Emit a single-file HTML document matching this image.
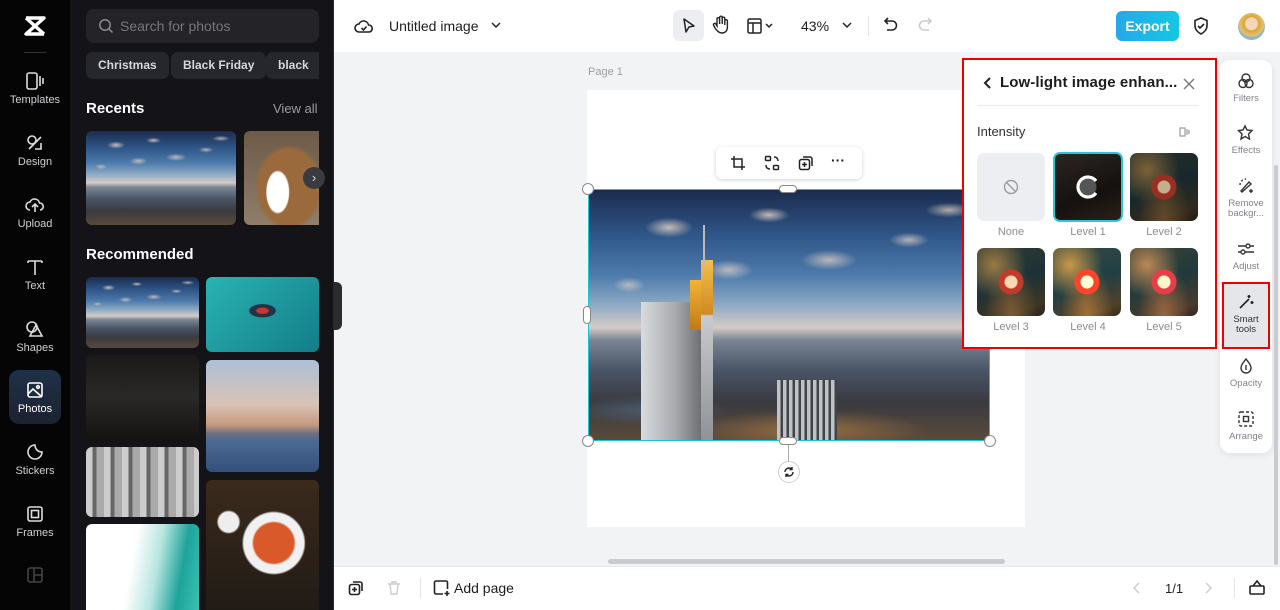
<!DOCTYPE html>
<html style="width:1280px;height:610px;overflow:hidden"><head><meta charset="utf-8"><style>
*{box-sizing:border-box;margin:0;padding:0}
body{width:1280px;height:610px;overflow:hidden;font-family:"Liberation Sans",sans-serif;background:#f1f3f5;position:relative}
.abs{position:absolute}
.nav{left:0;top:0;width:70px;height:610px;background:#050506}
.navi{position:absolute;left:0;width:70px;text-align:center;color:#cfd0d4;font-size:11px}
.navi svg{display:block;margin:0 auto 3px}
.panel{left:70px;top:0;width:264px;height:610px;background:#141418;overflow:hidden}
.chip{position:absolute;top:52px;height:27px;border-radius:7px;background:#26272c;color:#d6d7da;font-size:12px;font-weight:bold;line-height:27px;padding:0 12px}
.th{position:absolute;border-radius:6px;overflow:hidden}
.top{left:334px;top:0;width:946px;height:52px;background:#fff}
.bot{left:334px;top:566px;width:946px;height:44px;background:#fff;border-top:1px solid #e6e8eb}
.lbl{font-size:11px;color:#8a8d93;text-align:center;position:absolute;width:68px}
.tile{position:absolute;width:68px;height:68px;border-radius:7px;overflow:hidden}
.lant{background:radial-gradient(ellipse at 50% 50%,#f6d9b0 0 6px,#c23a2b 7px 12px,transparent 13px),radial-gradient(ellipse at 25% 25%,#9a7a45 0,transparent 45%),radial-gradient(ellipse at 50% 95%,#7a5a34 0,transparent 55%),linear-gradient(160deg,#2f3a34,#1d3236 50%,#3e3424 85%,#2a2218)}
.sb{position:absolute;left:1220px;width:52px;text-align:center;font-size:9.5px;color:#80838a;line-height:10px}
.sb svg{display:block;margin:0 auto 4px}
.sky{background:
 radial-gradient(ellipse 6% 4% at 20% 15%,rgba(235,215,200,.8),transparent),
 radial-gradient(ellipse 5% 3% at 45% 10%,rgba(235,215,200,.8),transparent),
 radial-gradient(ellipse 7% 4% at 60% 28%,rgba(235,215,200,.7),transparent),
 radial-gradient(ellipse 5% 3% at 80% 20%,rgba(235,215,200,.7),transparent),
 radial-gradient(ellipse 6% 4% at 35% 32%,rgba(235,215,200,.7),transparent),
 radial-gradient(ellipse 4% 3% at 10% 38%,rgba(235,215,200,.6),transparent),
 radial-gradient(ellipse 6% 3% at 90% 8%,rgba(235,215,200,.7),transparent),
 linear-gradient(180deg,#1b2b4e 0,#2f5688 18%,#4d7bab 34%,#8eaac4 46%,#d4cbc6 55%,#7b8593 60%,#4a5566 72%,#3a3a40 85%,#5a4a3a 100%)}
</style></head><body>
<div class="abs nav">
 <svg class="abs" style="left:24px;top:16px" width="22" height="20" viewBox="0 0 22 20"><path d="M2 2h18L2 18h18" fill="none" stroke="#fff" stroke-width="3.4" stroke-linejoin="round"/><path d="M2 2L20 18" stroke="#fff" stroke-width="3.4"/></svg>
 <div class="abs" style="left:24px;top:52px;width:22px;height:1px;background:#333"></div>
 <div class="navi" style="top:71px"><svg width="20" height="20" viewBox="0 0 20 20" fill="none" stroke="#ddd" stroke-width="1.6"><rect x="2" y="2" width="10" height="16" rx="2"/><path d="M15 5v10M18 7v6"/></svg>Templates</div>
 <div class="navi" style="top:133px"><svg width="20" height="20" viewBox="0 0 20 20" fill="none" stroke="#ddd" stroke-width="1.6"><circle cx="7" cy="7" r="4"/><path d="M4 16L16 4M10 16h6v-6"/></svg>Design</div>
 <div class="navi" style="top:195px"><svg width="20" height="20" viewBox="0 0 20 20" fill="none" stroke="#ddd" stroke-width="1.6"><path d="M5 15a4 4 0 010-8 5 5 0 019.5 1A3.5 3.5 0 0115 15M10 17v-7M7 12l3-3 3 3"/></svg>Upload</div>
 <div class="navi" style="top:257px"><svg width="20" height="20" viewBox="0 0 20 20" fill="none" stroke="#ddd" stroke-width="1.6"><path d="M3 4h14M10 4v14M3 4v2M17 4v2"/></svg>Text</div>
 <div class="navi" style="top:319px"><svg width="20" height="20" viewBox="0 0 20 20" fill="none" stroke="#ddd" stroke-width="1.6"><circle cx="7" cy="8" r="5"/><path d="M11 6l6 11H5z"/></svg>Shapes</div>
 <div class="abs" style="left:9px;top:370px;width:52px;height:54px;border-radius:10px;background:linear-gradient(#1e3148,#1c2230)"></div>
 <div class="navi" style="top:380px;color:#fff"><svg width="20" height="20" viewBox="0 0 20 20" fill="none" stroke="#fff" stroke-width="1.6"><rect x="3" y="3" width="14" height="14" rx="2"/><path d="M3 14l5-5 9 8"/><circle cx="13" cy="7" r="1.3"/></svg>Photos</div>
 <div class="navi" style="top:442px"><svg width="20" height="20" viewBox="0 0 20 20" fill="none" stroke="#ddd" stroke-width="1.6"><path d="M17 10a7 7 0 11-7-7c0 4 3 7 7 7z"/></svg>Stickers</div>
 <div class="navi" style="top:504px"><svg width="20" height="20" viewBox="0 0 20 20" fill="none" stroke="#ddd" stroke-width="1.6"><rect x="3" y="3" width="14" height="14" rx="2"/><rect x="6.5" y="6.5" width="7" height="7"/></svg>Frames</div>
 <svg class="abs" style="left:26px;top:566px" width="18" height="18" viewBox="0 0 18 18" fill="none" stroke="#444" stroke-width="1.6"><rect x="2" y="2" width="14" height="14" rx="2"/><path d="M8 2v14M8 9h8"/></svg>
</div>
<div class="abs panel">
 <div class="abs" style="left:16px;top:9px;width:233px;height:34px;border-radius:8px;background:#232328"></div>
 <svg class="abs" style="left:28px;top:18px" width="16" height="16" viewBox="0 0 16 16" fill="none" stroke="#8a8b90" stroke-width="1.5"><circle cx="7" cy="7" r="5.2"/><path d="M11 11l3.5 3.5"/></svg>
 <div class="abs" style="left:50px;top:18px;font-size:14px;color:#76777c">Search for photos</div>
 <div class="chip" style="left:16px">Christmas</div>
 <div class="chip" style="left:101px">Black Friday</div>
 <div class="chip" style="left:196px;width:53px;border-radius:7px 0 0 7px">black</div>
 <div class="abs" style="left:16px;top:100px;font-size:15px;font-weight:bold;color:#fff">Recents</div>
 <div class="abs" style="left:203px;top:101px;font-size:13px;color:#9a9ba0">View all</div>
 <div class="th sky" style="left:16px;top:131px;width:150px;height:94px"></div>
 <div class="th" style="left:174px;top:131px;width:75px;height:94px;border-radius:6px 0 0 6px;background:radial-gradient(ellipse 12px 22px at 45% 65%,#fff 0 90%,transparent),radial-gradient(ellipse at 60% 60%,#9b6a3c 0 30px,transparent 34px),linear-gradient(#6d5b48,#8f7e6a)"></div>
 <div class="abs" style="left:233px;top:167px;width:22px;height:22px;border-radius:50%;background:#3a3b40;color:#ddd;font-size:13px;text-align:center;line-height:21px">›</div>
 <div class="abs" style="left:16px;top:246px;font-size:15px;font-weight:bold;color:#fff">Recommended</div>
 <div class="th sky" style="left:16px;top:277px;width:113px;height:71px"></div>
 <div class="th" style="left:136px;top:277px;width:113px;height:75px;background:radial-gradient(ellipse 14px 7px at 50% 45%,#c33 0 40%,#234 50% 90%,transparent),linear-gradient(135deg,#2ab3b3,#127d88)"></div>
 <div class="th" style="left:16px;top:355px;width:113px;height:84px;background:linear-gradient(#1a1918,#2a2927 50%,#141312)"></div>
 <div class="th" style="left:136px;top:360px;width:113px;height:112px;background:linear-gradient(180deg,#aec0d8 0,#d9c2b5 40%,#c59a7e 58%,#6a6e7e 66%,#4d6a93 72%,#33507a 100%)"></div>
 <div class="th" style="left:16px;top:447px;width:113px;height:70px;background:repeating-linear-gradient(90deg,#ccc 0 6px,#666 7px 10px,#aaa 11px 18px),#888"></div>
 <div class="th" style="left:136px;top:480px;width:113px;height:140px;background:radial-gradient(circle at 60% 45%,#d9592a 0 20px,#f1f1f1 22px 30px,transparent 32px),radial-gradient(circle at 20% 30%,#eee 0 10px,transparent 12px),linear-gradient(#3b2a1c,#1f1a16)"></div>
 <div class="th" style="left:16px;top:524px;width:113px;height:100px;background:linear-gradient(100deg,#fff 40%,#b8e6e0 60%,#1fa39a 80%,#3cc5b8)"></div>
</div>
<div class="abs" style="left:333px;top:0;width:1px;height:610px;background:#2a2a2e"></div>
<div class="abs" style="left:334px;top:282px;width:8px;height:48px;background:#2b2c30;border-radius:0 6px 6px 0"></div>
<div class="abs top">
 <svg class="abs" style="left:20px;top:17px" width="20" height="18" viewBox="0 0 20 18" fill="none" stroke="#222" stroke-width="1.6"><path d="M5 15a4 4 0 010-8 5 5 0 019.5 1A3.5 3.5 0 0115 15z"/><path d="M7.5 11l2 2 3-3.5"/></svg>
 <div class="abs" style="left:55px;top:18px;font-size:14px;color:#1d1d1f">Untitled image</div>
 <svg class="abs" style="left:157px;top:21px" width="10" height="8" viewBox="0 0 10 8"><path d="M1 2l4 4 4-4" fill="none" stroke="#222" stroke-width="1.5"/></svg>
 <div class="abs" style="left:339px;top:10px;width:31px;height:31px;border-radius:6px;background:#eceef1"></div>
 <svg class="abs" style="left:347px;top:17px" width="16" height="18" viewBox="0 0 16 18"><path d="M3 2l10 7-5 1-3 5z" fill="none" stroke="#222" stroke-width="1.5" stroke-linejoin="round"/></svg>
 <svg class="abs" style="left:378px;top:15px" width="18" height="20" viewBox="0 0 18 20" fill="none" stroke="#222" stroke-width="1.4"><path d="M5 11V4a1.3 1.3 0 012.6 0v5V2.5a1.3 1.3 0 012.6 0V9V3.5a1.3 1.3 0 012.6 0V10V6a1.3 1.3 0 012.6 0v6c0 4-2.5 6-5.5 6S5 16 3 13l-1.5-3a1.3 1.3 0 012.2-1.2z"/></svg>
 <svg class="abs" style="left:412px;top:17px" width="30" height="18" viewBox="0 0 30 18" fill="none" stroke="#222" stroke-width="1.5"><rect x="2" y="2" width="13" height="14" rx="1.5"/><path d="M2 6h13M7 6v10M20 7l3 3 3-3"/></svg>
 <div class="abs" style="left:467px;top:18px;font-size:14px;color:#1d1d1f">43%</div>
 <svg class="abs" style="left:508px;top:21px" width="10" height="8" viewBox="0 0 10 8"><path d="M1 2l4 4 4-4" fill="none" stroke="#222" stroke-width="1.5"/></svg>
 <div class="abs" style="left:534px;top:16px;width:1px;height:20px;background:#e3e4e7"></div>
 <svg class="abs" style="left:549px;top:16px" width="16" height="18" viewBox="0 0 16 18" fill="none" stroke="#222" stroke-width="1.6"><path d="M5 2L2 5l3 3M2 5h7a4.5 4.5 0 010 9H4"/></svg>
 <svg class="abs" style="left:583px;top:16px" width="16" height="18" viewBox="0 0 16 18" fill="none" stroke="#ccc" stroke-width="1.6"><path d="M11 2l3 3-3 3M14 5H7a4.5 4.5 0 000 9h5"/></svg>
 <div class="abs" style="left:782px;top:11px;width:63px;height:30px;border-radius:6px;background:linear-gradient(90deg,#27a7ec,#13c8e0);color:#fff;font-size:14px;font-weight:bold;text-align:center;line-height:30px">Export</div>
 <svg class="abs" style="left:858px;top:16px" width="18" height="20" viewBox="0 0 18 20" fill="none" stroke="#222" stroke-width="1.6"><path d="M9 2l6 2.5v5c0 4-3 7-6 8.5-3-1.5-6-4.5-6-8.5v-5z"/><path d="M6 10l2 2 4-4"/></svg>
 <div class="abs" style="left:904px;top:13px;width:27px;height:27px;border-radius:50%;background:radial-gradient(circle at 50% 40%,#f3d7b8 0 6px,#d9a63a 7px,#e6c06a 12px,#8ab4d0 14px)"></div>
</div>
<div class="abs" style="left:588px;top:66px;font-size:11px;color:#9a9da3">Page 1</div>
<div class="abs" style="left:587px;top:90px;width:438px;height:437px;background:#fff"></div>
<div class="abs sky" style="left:588px;top:189px;width:402px;height:252px;border:1.5px solid #19c4d4;overflow:hidden">
 <div class="abs" style="left:0;top:150px;width:400px;height:100px;background:radial-gradient(ellipse 30% 20% at 55% 90%,rgba(220,150,70,.5),transparent),radial-gradient(ellipse 20% 15% at 15% 70%,rgba(80,110,140,.6),transparent)"></div>
 <div class="abs" style="left:52px;top:112px;width:62px;height:140px;background:linear-gradient(90deg,#d9dcdf,#a8aaad 55%,#6a6b6e)"></div>
 <div class="abs" style="left:101px;top:90px;width:16px;height:50px;background:linear-gradient(#f2b436,#c07a18)"></div>
 <div class="abs" style="left:112px;top:70px;width:12px;height:180px;background:linear-gradient(#f2c050 0,#d08a20 30%,#c9cbce 31%,#8f9296)"></div>
 <div class="abs" style="left:114px;top:35px;width:2px;height:40px;background:#bbb"></div>
 <div class="abs" style="left:188px;top:190px;width:60px;height:62px;background:repeating-linear-gradient(90deg,#bfc3c8 0 3px,#404348 4px 6px)"></div>
</div>
<div class="abs" style="left:716px;top:147px;width:146px;height:32px;background:#fff;border-radius:6px;box-shadow:0 1px 4px rgba(0,0,0,.18)"></div>
<svg class="abs" style="left:730px;top:155px" width="16" height="16" viewBox="0 0 16 16" fill="none" stroke="#222" stroke-width="1.5"><path d="M4 1v11h11M1 4h11v11"/></svg>
<svg class="abs" style="left:764px;top:155px" width="16" height="16" viewBox="0 0 16 16" fill="none" stroke="#222" stroke-width="1.5"><rect x="1.5" y="1.5" width="5" height="4" rx="1"/><rect x="9.5" y="10.5" width="5" height="4" rx="1"/><path d="M10 2c3 0 4 2 4 4M6 14c-3 0-4-2-4-4"/></svg>
<svg class="abs" style="left:798px;top:155px" width="16" height="16" viewBox="0 0 16 16" fill="none" stroke="#222" stroke-width="1.5"><rect x="1.5" y="4.5" width="10" height="10" rx="2"/><path d="M5 2h7a2 2 0 012 2v7M6.5 7v5M4 9.5h5"/></svg>
<div class="abs" style="left:831px;top:152px;font-size:14px;font-weight:bold;color:#222">···</div>
<div class="abs" style="left:582px;top:183px;width:12px;height:12px;border-radius:50%;background:#fff;border:1px solid #888"></div>
<div class="abs" style="left:984px;top:435px;width:12px;height:12px;border-radius:50%;background:#fff;border:1px solid #888"></div>
<div class="abs" style="left:582px;top:435px;width:12px;height:12px;border-radius:50%;background:#fff;border:1px solid #888"></div>
<div class="abs" style="left:779px;top:185px;width:18px;height:8px;border-radius:4px;background:#fff;border:1px solid #888"></div>
<div class="abs" style="left:779px;top:437px;width:18px;height:8px;border-radius:4px;background:#fff;border:1px solid #888"></div>
<div class="abs" style="left:583px;top:306px;width:8px;height:18px;border-radius:4px;background:#fff;border:1px solid #888"></div>
<div class="abs" style="left:788px;top:445px;width:1px;height:17px;background:#aaa"></div>
<div class="abs" style="left:778px;top:461px;width:22px;height:22px;border-radius:50%;background:#fff;border:1px solid #ccc"></div>
<svg class="abs" style="left:783px;top:466px" width="12" height="12" viewBox="0 0 12 12" fill="none" stroke="#222" stroke-width="1.4"><path d="M2 6a4 4 0 017-2.6M10 6a4 4 0 01-7 2.6M9 1v2.5H6.5M3 11V8.5h2.5"/></svg>
<!-- panel -->
<div class="abs" style="left:962px;top:58px;width:255px;height:291px;border:2.5px solid #e00;background:#fff"></div>
<svg class="abs" style="left:983px;top:76px" width="10" height="14" viewBox="0 0 10 14"><path d="M7 2L2 7l5 5" fill="none" stroke="#222" stroke-width="2"/></svg>
<div class="abs" style="left:1000px;top:74px;font-size:15px;font-weight:bold;color:#1d1d1f;letter-spacing:.1px">Low-light image enhan...</div>
<svg class="abs" style="left:1182px;top:77px" width="14" height="14" viewBox="0 0 14 14"><path d="M2 2l10 10M12 2L2 12" stroke="#777" stroke-width="1.4"/></svg>
<div class="abs" style="left:977px;top:105px;width:222px;height:1px;background:#e8e9eb"></div>
<div class="abs" style="left:977px;top:124px;font-size:13px;color:#333">Intensity</div>
<svg class="abs" style="left:1178px;top:125px" width="14" height="14" viewBox="0 0 14 14" fill="none" stroke="#999" stroke-width="1.2"><rect x="2" y="3" width="5" height="8"/><path d="M9 4v6M11 5v4"/></svg>
<div class="tile" style="left:977px;top:153px;background:#eceef1"></div>
<svg class="abs" style="left:1003px;top:179px" width="16" height="16" viewBox="0 0 16 16" fill="none" stroke="#9a9ca0" stroke-width="1.4"><circle cx="8" cy="8" r="6.5"/><path d="M3.5 3.5l9 9"/></svg>
<div class="tile" style="left:1053px;top:152px;width:70px;height:70px;border:2px solid #2cc6d8;background:radial-gradient(circle at 50% 50%,#555 0 8px,transparent 9px),linear-gradient(160deg,#2c2622,#14110f 60%,#2a2019)"></div>
<svg class="abs" style="left:1074px;top:173px" width="28" height="28" viewBox="0 0 28 28"><path d="M22 8A10 10 0 1 0 22 20" fill="none" stroke="#fff" stroke-width="3.2"/></svg>
<div class="tile lant" style="left:1130px;top:153px;filter:brightness(.8)"></div>
<div class="tile lant" style="left:977px;top:248px"></div>
<div class="tile lant" style="left:1053px;top:248px;filter:brightness(1.25) saturate(1.2)"></div>
<div class="tile lant" style="left:1130px;top:248px;filter:brightness(1.15) hue-rotate(-10deg)"></div>
<div class="lbl" style="left:977px;top:226px">None</div>
<div class="lbl" style="left:1054px;top:226px">Level 1</div>
<div class="lbl" style="left:1130px;top:226px">Level 2</div>
<div class="lbl" style="left:977px;top:321px">Level 3</div>
<div class="lbl" style="left:1054px;top:321px">Level 4</div>
<div class="lbl" style="left:1130px;top:321px">Level 5</div>
<!-- right sidebar -->
<div class="abs" style="left:1220px;top:60px;width:52px;height:393px;background:#fff;border-radius:10px;box-shadow:0 2px 8px rgba(0,0,0,.08)"></div>
<div class="abs" style="left:1222px;top:282px;width:48px;height:67px;border:2.5px solid #e00;background:#e4e6ea"></div>
<div class="sb" style="top:72px"><svg width="18" height="18" viewBox="0 0 18 18" fill="none" stroke="#333" stroke-width="1.4"><circle cx="9" cy="6" r="4"/><circle cx="6" cy="11.5" r="4"/><circle cx="12" cy="11.5" r="4"/></svg>Filters</div>
<div class="sb" style="top:124px"><svg width="18" height="18" viewBox="0 0 18 18" fill="none" stroke="#333" stroke-width="1.4"><path d="M8 2l2 4 5 .5-3.5 3.5 1 5L8 12.5 4 15l1-5L1.5 6.5 6 6z"/></svg>Effects</div>
<div class="sb" style="top:177px"><svg width="18" height="18" viewBox="0 0 18 18" fill="none" stroke="#333" stroke-width="1.4"><path d="M4 14l8-9 2 2-9 8zM14 12v4M12 14h4"/><path d="M3 8a6 6 0 016-6" stroke-dasharray="2 2"/></svg>Remove<br>backgr...</div>
<div class="sb" style="top:240px"><svg width="18" height="18" viewBox="0 0 18 18" fill="none" stroke="#333" stroke-width="1.4"><path d="M1 6h16M1 12h16"/><circle cx="11" cy="6" r="2" fill="#fff"/><circle cx="6" cy="12" r="2" fill="#fff"/></svg>Adjust</div>
<div class="sb" style="top:293px;color:#333"><svg width="18" height="18" viewBox="0 0 18 18" fill="none" stroke="#222" stroke-width="1.6"><path d="M3 15l9-9M12 2v3M10.5 3.5h3M15 8v3M13.5 9.5h3"/></svg>Smart<br>tools</div>
<div class="sb" style="top:357px"><svg width="18" height="18" viewBox="0 0 18 18" fill="none" stroke="#333" stroke-width="1.4"><path d="M9 2c3 4 5 6 5 9a5 5 0 01-10 0c0-3 2-5 5-9z"/><path d="M9 8v5"/></svg>Opacity</div>
<div class="sb" style="top:410px"><svg width="18" height="18" viewBox="0 0 18 18" fill="none" stroke="#333" stroke-width="1.4"><rect x="2" y="2" width="14" height="14" rx="2" stroke-dasharray="3 2"/><rect x="6.5" y="6.5" width="5" height="5"/></svg>Arrange</div>
<div class="abs" style="left:1274px;top:165px;width:4px;height:400px;border-radius:2px;background:#c9cbcf"></div>
<div class="abs" style="left:608px;top:559px;width:397px;height:5px;border-radius:3px;background:#c9cbcf"></div>
<div class="abs bot">
 <svg class="abs" style="left:14px;top:13px" width="16" height="16" viewBox="0 0 16 16" fill="none" stroke="#222" stroke-width="1.6"><rect x="1.5" y="4.5" width="10" height="10" rx="2"/><path d="M5 2h7a2 2 0 012 2v7M6.5 7v5M4 9.5h5"/></svg>
 <svg class="abs" style="left:53px;top:13px" width="14" height="16" viewBox="0 0 14 16" fill="none" stroke="#ccc" stroke-width="1.4"><path d="M1 4h12M5 4V2h4v2M3 4l1 10h6l1-10"/></svg>
 <div class="abs" style="left:86px;top:11px;width:1px;height:20px;background:#e3e4e7"></div>
 <svg class="abs" style="left:99px;top:12px" width="18" height="18" viewBox="0 0 18 18" fill="none" stroke="#222" stroke-width="1.6"><path d="M10 15H3a1.5 1.5 0 01-1.5-1.5v-10A1.5 1.5 0 013 2h10a1.5 1.5 0 011.5 1.5V10M14 12v5M11.5 14.5h5"/></svg>
 <div class="abs" style="left:120px;top:13px;font-size:14px;color:#1d1d1f">Add page</div>
 <svg class="abs" style="left:798px;top:14px" width="10" height="14" viewBox="0 0 10 14"><path d="M7 2L2 7l5 5" fill="none" stroke="#ccc" stroke-width="1.4"/></svg>
 <div class="abs" style="left:831px;top:14px;font-size:13px;color:#222">1/1</div>
 <svg class="abs" style="left:869px;top:14px" width="10" height="14" viewBox="0 0 10 14"><path d="M3 2l5 5-5 5" fill="none" stroke="#ccc" stroke-width="1.4"/></svg>
 <div class="abs" style="left:900px;top:11px;width:1px;height:20px;background:#e3e4e7"></div>
 <svg class="abs" style="left:914px;top:11px" width="18" height="18" viewBox="0 0 18 18" fill="none" stroke="#222" stroke-width="1.6"><rect x="2" y="8" width="14" height="8" rx="1"/><path d="M5 8l4-5 4 5"/></svg>
</div>
</body></html>
